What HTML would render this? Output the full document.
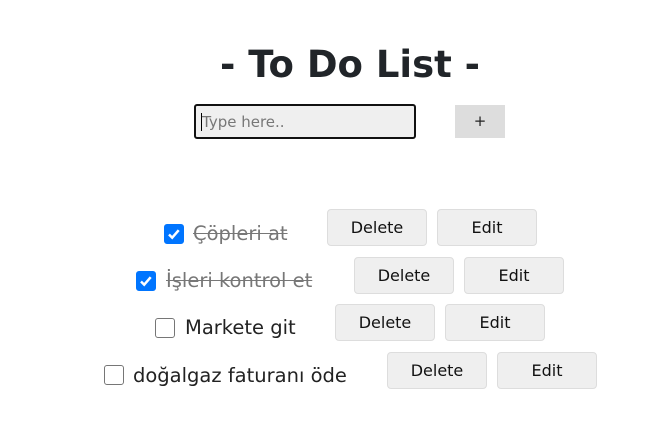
<!DOCTYPE html>
<html><head><style>
body{margin:0;width:660px;height:445px;background:#fff;position:relative;font-family:"DejaVu Sans","Liberation Sans",sans-serif;overflow:hidden}
.a{position:absolute}
h1{position:absolute;left:0;width:700px;text-align:center;top:43px;margin:0;font:bold 37px "DejaVu Sans",sans-serif;color:#212529}
.inp{left:194px;top:104px;width:213px;height:31px;border:2px solid #111;border-radius:3px;background:#efefef;font-size:16px;color:#777;line-height:31px;padding-left:5px;box-sizing:content-box}
.plus{left:455px;top:105px;width:50px;height:33px;background:#ddd;text-align:center;line-height:33px;font-size:15px;color:#222}
.cb{width:18px;height:18px;border:1px solid #767676;border-radius:3px;background:#fff}
.cb.c{background:#0075ff;border-color:#0075ff}
.cb.c svg{display:block}
.t{font-size:19.5px;color:#222;line-height:22px}
.t.d{color:#777;text-decoration:line-through}
.b{width:98px;height:35px;border:1px solid #ddd;border-radius:4px;background:#efefef;text-align:center;line-height:35px;font-size:16px;color:#111}
</style></head><body>
<h1>- To Do List -</h1>
<div class="a inp"><span style="border-left:1px solid #000;font-size:15px">Type here..</span></div>
<div class="a plus">+</div>

<div class="a cb c" style="left:164px;top:224px"><svg width="18" height="18"><path d="M4 9.5l3.2 3.2 6.5-7.5" stroke="#fff" stroke-width="2.5" fill="none"/></svg></div>
<div class="a t d" style="left:193px;top:223px">Çöpleri at</div>
<div class="a b" style="left:327px;top:209px">Delete</div>
<div class="a b" style="left:437px;top:209px">Edit</div>

<div class="a cb c" style="left:136px;top:271px"><svg width="18" height="18"><path d="M4 9.5l3.2 3.2 6.5-7.5" stroke="#fff" stroke-width="2.5" fill="none"/></svg></div>
<div class="a t d" style="left:166px;top:270px">İşleri kontrol et</div>
<div class="a b" style="left:354px;top:257px">Delete</div>
<div class="a b" style="left:464px;top:257px">Edit</div>

<div class="a cb" style="left:155px;top:318px"></div>
<div class="a t" style="left:185px;top:317px">Markete git</div>
<div class="a b" style="left:335px;top:304px">Delete</div>
<div class="a b" style="left:445px;top:304px">Edit</div>

<div class="a cb" style="left:104px;top:365px"></div>
<div class="a t" style="left:133px;top:365px">doğalgaz faturanı öde</div>
<div class="a b" style="left:387px;top:352px">Delete</div>
<div class="a b" style="left:497px;top:352px">Edit</div>
</body></html>
